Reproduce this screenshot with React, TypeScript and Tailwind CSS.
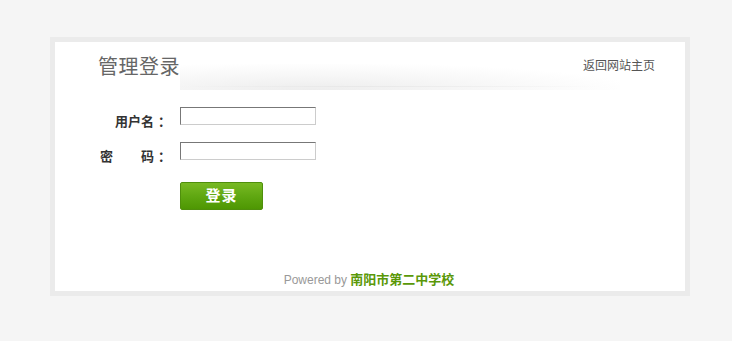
export default function App() {
  const font = { fontFamily: '"Liberation Sans", "Noto Sans CJK SC", sans-serif' };

  return (
    <div className="min-h-screen bg-[#f5f5f5] pt-[37px] pl-[50px]" style={font}>
      <div className="w-[640px] h-[259px] border-[5px] border-[#ebebeb] bg-white flex flex-col">
        {/* Header */}
        <div className="relative h-[50px] flex items-center justify-between pl-[43px] pr-[30px] shrink-0">
          <div className="absolute left-[125px] top-[22px] w-[440px] h-[26px] bg-[radial-gradient(ellipse_at_30%_100%,#ededed,#f8f8f8_45%,rgba(255,255,255,0)_75%)]" />
          <div className="absolute left-[125px] top-[44px] w-[420px] h-px bg-[linear-gradient(to_right,rgba(230,230,230,0),#e8e8e8_40%,rgba(230,230,230,0))]" />
          <h1 className="relative text-[20px] leading-[24px] text-[#666] tracking-[0.5px]">管理登录</h1>
          <a className="relative text-[12px] leading-[16px] text-[#555] -mt-[2px]">返回网站主页</a>
        </div>

        {/* Form */}
        <div className="flex flex-col mt-[15px]">
          <div className="flex items-start h-[18px]">
            <label className="w-[112px] flex justify-end text-[13px] leading-[16px] font-bold text-[#333] mt-[7px]">
              <span>用户名</span>
              <span className="inline-block w-[13px] pl-[4px]">：</span>
            </label>
            <input
              type="text"
              className="ml-[13px] w-[136px] h-[18px] bg-white border border-t-[#777] border-l-[#777] border-b-[#ccc] border-r-[#ccc] outline-none"
            />
          </div>
          <div className="flex items-start h-[18px] mt-[17px]">
            <label className="w-[112px] pl-[45px] flex justify-between text-[13px] leading-[16px] font-bold text-[#333] mt-[7px]">
              <span>密</span>
              <span className="flex">
                <span>码</span>
                <span className="inline-block w-[13px] pl-[4px]">：</span>
              </span>
            </label>
            <input
              type="password"
              className="ml-[13px] w-[136px] h-[18px] bg-white border border-t-[#777] border-l-[#777] border-b-[#ccc] border-r-[#ccc] outline-none"
            />
          </div>
          <div className="pl-[125px] mt-[22px]">
            <button className="w-[83px] h-[28px] rounded-[2px] border border-[#4f8f0c] bg-[linear-gradient(to_bottom,#78b923,#5ea610_55%,#4e9703)] text-white text-[15px] font-bold tracking-[1px]">
              登录
            </button>
          </div>
        </div>

        {/* Footer */}
        <div className="mt-auto pb-[3px] pr-[2px] text-center text-[12px] leading-[16px]">
          <span className="text-[#999]">Powered by </span>
          <span className="text-[13px] font-bold text-[#5a9808]">南阳市第二中学校</span>
        </div>
      </div>
    </div>
  );
}
